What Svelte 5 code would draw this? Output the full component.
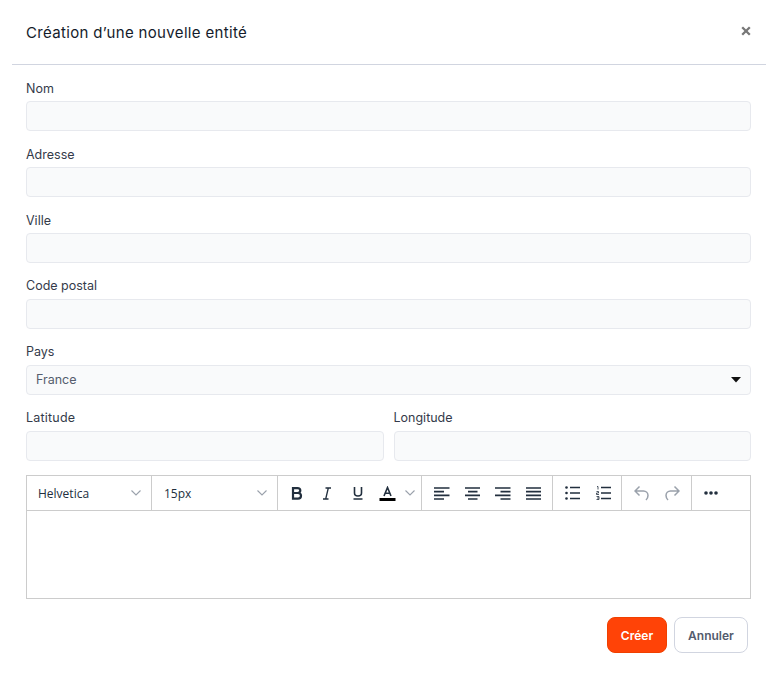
<script>
  const fields = ['Nom', 'Adresse', 'Ville'];
</script>

<div class="modal">
  <header class="head">
    <h2>Création d’une nouvelle entité</h2>
    <button class="close" aria-label="Fermer">
      <svg width="10" height="10" viewBox="0 0 10 10"><path d="M1.200 1.200 8.800 8.800M8.800 1.200 1.200 8.800" stroke="#777" stroke-width="2.300" fill="none"/></svg>
    </button>
  </header>
  <div class="body">
    {#each fields as f}
      <div class="field">
        <div class="label">{f}</div>
        <div class="input"></div>
      </div>
    {/each}
    <div class="field">
      <div class="label up">Code postal</div>
      <div class="input"></div>
    </div>
    <div class="field">
      <div class="label up">Pays</div>
      <div class="input select">
        <span>France</span>
        <svg width="10" height="6" viewBox="0 0 10 6"><path d="M0 0H10L5 5.500Z" fill="#111"/></svg>
      </div>
    </div>
    <div class="row">
      <div class="field"><div class="label up wide">Latitude</div><div class="input"></div></div>
      <div class="field"><div class="label up">Longitude</div><div class="input"></div></div>
    </div>
    <div class="editor">
      <div class="toolbar">
        <div class="group g1"><span>Helvetica</span>
          <svg class="chev" width="10" height="6" viewBox="0 0 10 6"><path d="M.5.5 5 5 9.500.5" /></svg></div>
        <div class="group g2"><span>15px</span>
          <svg class="chev" width="10" height="6" viewBox="0 0 10 6"><path d="M.5.5 5 5 9.500.5" /></svg></div>
        <div class="group g3">
          <svg width="12" height="13" viewBox="0 0 12 13" class="ic"><path d="M2 1.200H6.500C8.300 1.200 9.300 2.200 9.300 3.600 9.300 5 8.300 6 6.500 6H2ZM2 6H7C9 6 10 7.200 10 8.800 10 10.400 9 11.600 7 11.600H2Z" fill="none" stroke="#222f3e" stroke-width="2.200"/></svg>
          <svg width="10" height="13" viewBox="0 0 10 13" class="ic i"><path d="M3.500 1H9M1 12H6.500M6.300 1 3.700 12" fill="none" stroke="#222f3e" stroke-width="1.300"/></svg>
          <svg width="12" height="14" viewBox="0 0 12 14" class="ic u"><path d="M2.500 1V7C2.500 9 4 10 6 10S9.500 9 9.500 7V1M1.500 13H10.500" fill="none" stroke="#222f3e" stroke-width="1.600"/></svg>
          <svg width="17" height="15" viewBox="0 0 17 15" class="ic a"><path d="M5 10 8.500 1.500 12 10M6.200 7.200H10.800" fill="none" stroke="#222f3e" stroke-width="1.600"/><rect x="0.500" y="12" width="16" height="3" fill="#000"/></svg>
          <svg class="chev c2" width="10" height="6" viewBox="0 0 10 6"><path d="M.5.5 5 5 9.500.5" /></svg>
        </div>
        <div class="group g4">
          <svg width="15.500" height="13" viewBox="0 0 15.500 13" class="al"><path d="M0 1H15.500M0 4.700H10M0 8.300H15.500M0 12H10" /></svg>
          <svg width="15.500" height="13" viewBox="0 0 15.500 13" class="al"><path d="M0 1H15.500M3 4.700H12.500M0 8.300H15.500M3 12H12.500" /></svg>
          <svg width="15.500" height="13" viewBox="0 0 15.500 13" class="al"><path d="M0 1H15.500M5.500 4.700H15.500M0 8.300H15.500M5.500 12H15.500" /></svg>
          <svg width="15.500" height="13" viewBox="0 0 15.500 13" class="al"><path d="M0 1H15.500M0 4.700H15.500M0 8.300H15.500M0 12H15.500" /></svg>
        </div>
        <div class="group g5">
          <svg width="15" height="14" viewBox="0 0 15 14" class="list"><path d="M5 1.500H15M5 7H15M5 12.500H15" class="l"/><circle cx="1.500" cy="1.500" r="1.300"/><circle cx="1.500" cy="7" r="1.300"/><circle cx="1.500" cy="12.500" r="1.300"/></svg>
          <svg width="15" height="14" viewBox="0 0 15 14" class="list"><path d="M5 1.500H15M5 7H15M5 12.500H15" class="l"/><path d="M1 .5H2V3.500M.5 5.500H2.500V7H.5V8.500H3M.5 10.500H3V13.500H.5M1 12H3" class="n"/></svg>
        </div>
        <div class="group g6">
          <svg width="15" height="16" viewBox="0 0 15 16" class="hist"><path d="M5.500 1.500 1 6 5.500 10.500M1 6H9.500C12 6 14 8 14 10.500 14 12 13 14 12 15"/></svg>
          <svg width="15" height="16" viewBox="0 0 15 16" class="hist"><path d="M9.500 1.500 14 6 9.500 10.500M14 6H5.500C3 6 1 8 1 10.500 1 12 2 14 3 15"/></svg>
        </div>
        <div class="group g7">
          <svg width="14" height="4" viewBox="0 0 14 4"><circle cx="2" cy="2" r="1.800"/><circle cx="7" cy="2" r="1.800"/><circle cx="12" cy="2" r="1.800"/></svg>
        </div>
      </div>
      <div class="area"></div>
    </div>
    <div class="actions">
      <button class="btn primary">Créer</button>
      <button class="btn ghost">Annuler</button>
    </div>
  </div>
</div>

<style>
  :global(body) { margin: 0; background: #fff; }
  .modal { width: 775px; height: 676px; font-family: Inter, "Liberation Sans", sans-serif; color: #1a2233; box-sizing: border-box; overflow: hidden; }
  .head { margin: 0 9px 0 12px; height: 65px; box-sizing: border-box; border-bottom: 1px solid #d1d5e0; display: flex; align-items: center; justify-content: space-between; padding: 0 15px 0 14px; }
  h2 { margin: 2px 0 0; font-size: 15px; font-weight: 400; line-height: 20px; letter-spacing: .34px; color: #141b2b; }
  .close { border: 0; background: none; padding: 0; width: 10px; height: 10px; display: flex; margin-top: -2px; }
  .body { padding: 15px 24px 0 26px; }
  .field { display: flex; flex-direction: column; flex: 1; margin-bottom: 15px; }
  .label { font-size: 12.500px; line-height: 18px; height: 18px; margin-bottom: 3px; color: #343b4a; }
  .up { line-height: 16px; }
  .wide { letter-spacing: .2px; }
  .input { height: 30px; box-sizing: border-box; background: #f9fafb; border: 1px solid #e7e9ee; border-radius: 4px; }
  .select { display: flex; align-items: center; justify-content: space-between; padding: 0 9px 1px 9px; font-size: 12.500px; color: #555d6d; }
  .row { display: flex; gap: 10px; margin-bottom: 14px; }
  .row .field { margin-bottom: 0; }
  .editor { border: 1px solid #ccc; height: 124px; box-sizing: border-box; display: flex; flex-direction: column; }
  .toolbar { height: 34px; border-bottom: 1px solid #ccc; display: flex; font-family: "Open Sans", "Noto Sans", sans-serif; font-size: 12px; color: #222f3e; flex: none; }
  .group { display: flex; align-items: center; border-right: 1px solid #ccc; box-sizing: border-box; height: 100%; flex: none; }
  .group:last-child { border-right: 0; }
  .chev path { fill: none; stroke: #9aa1ab; stroke-width: 1.100; }
  .g1 { width: 125px; padding: 0 10px 0 11px; justify-content: space-between; }
  .g2 { width: 126px; padding: 0 10px 0 12px; justify-content: space-between; }
  .g3 { width: 144px; padding-left: 13px; position: relative; }
  .ic { flex: none; }
  .i { margin-left: 19px; }
  .u { margin-left: 20px; }
  .a { margin-left: 15px; }
  .c2 { margin-left: 9px; }
  .g4 { width: 131px; padding-left: 12px; gap: 15px; }
  .al path { fill: none; stroke: #222f3e; stroke-width: 1.700; }
  .g5 { width: 69px; padding-left: 12px; gap: 16px; }
  .list circle { fill: #222f3e; }
  .list .l { fill: none; stroke: #222f3e; stroke-width: 1.500; }
  .list .n { fill: none; stroke: #222f3e; stroke-width: .8; }
  .g6 { width: 70px; padding-left: 12px; gap: 16px; }
  .hist path { fill: none; stroke: #9aa1ab; stroke-width: 1.500; }
  .g7 { padding-left: 12px; }
  .g7 circle { fill: #222f3e; }
  .area { flex: 1; }
  .actions { display: flex; justify-content: flex-end; gap: 7px; margin-top: 18px; padding-right: 3px; }
  .btn { height: 36px; box-sizing: border-box; border-radius: 8px; font-family: Inter, "Liberation Sans", sans-serif; font-size: 12px; font-weight: 600; padding: 0; }
  .primary { width: 60px; background: #ff4307; border: 1px solid #f04000; color: #fff; }
  .ghost { width: 74px; background: #fff; border: 1px solid #d1d5e0; color: #535b6d; }
</style>
